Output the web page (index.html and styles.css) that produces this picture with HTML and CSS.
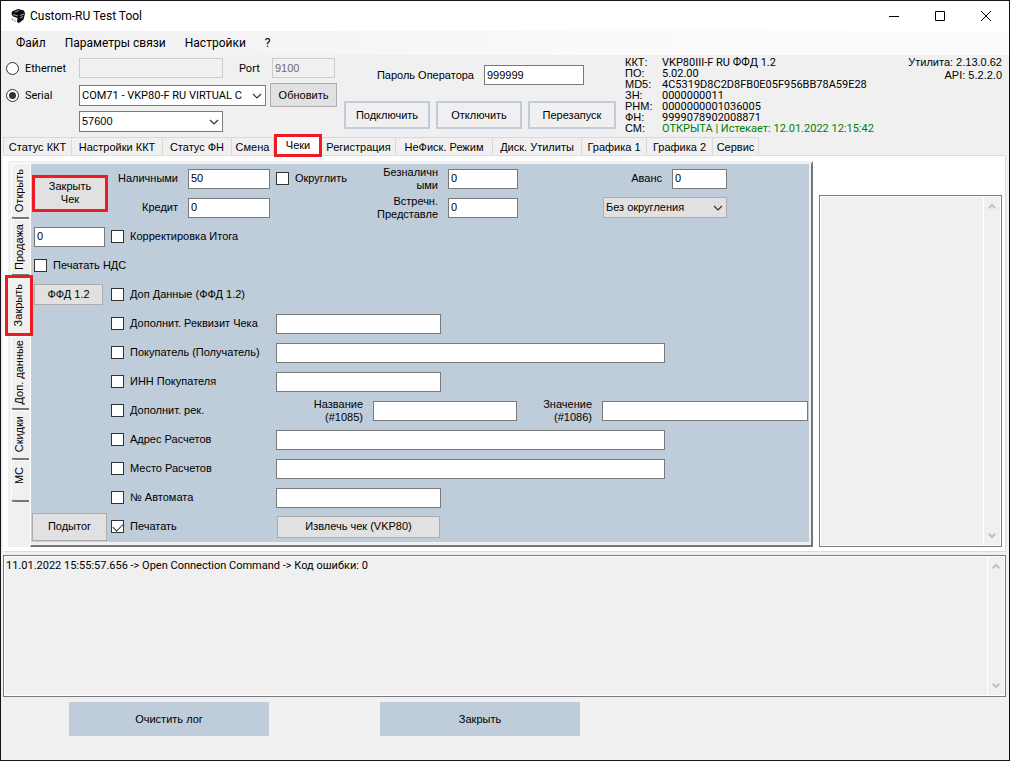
FILE: index.html
```html
<!DOCTYPE html>
<html lang="ru">
<head>
<meta charset="utf-8">
<title>Custom-RU Test Tool</title>
<meta name="viewport" content="width=device-width, initial-scale=1">
<link rel="stylesheet" href="styles.css">
</head>
<body>
<svg width="0" height="0" class="sprites" aria-hidden="true">
  <symbol id="chevron" viewBox="0 0 10 6"><path d="M1 1l4 4 4-4" fill="none" stroke="#333" stroke-width="1.200"/></symbol>
  <symbol id="up" viewBox="0 0 8 6"><path d="M0.7 5.2L4 1.9l3.300 3.300" fill="none" stroke="#bfbfbf" stroke-width="2"/></symbol>
  <symbol id="down" viewBox="0 0 8 6"><path d="M0.7 0.8L4 4.100l3.300-3.300" fill="none" stroke="#bfbfbf" stroke-width="2"/></symbol>
</svg>
<div class="window">
  <header class="titlebar">
    <svg class="logo" viewBox="0 0 16 16" aria-hidden="true">
      <path d="M2 3.500L8 1l6 1.500 1 3-1.500 6L9 15l-2-1 .500-4L3 8.500 1.500 6z" fill="#0a0a0a"/>
      <path d="M5 4l4-1.500M10 7.500l4-1.500M10 10l3-1.500M3 6.500l5 1.500" stroke="#ccc" stroke-width=".8" fill="none"/>
      <path d="M1 9.500l5 1.500v3l-5-2z" fill="#e4e4e4"/>
      <path d="M2 11.500l1 .5M4.500 13l1 .5" stroke="#666" fill="none"/>
    </svg>
    <h1>Custom-RU Test Tool</h1>
    <div class="winbuttons">
      <button type="button" aria-label="Свернуть"><svg viewBox="0 0 10 10"><path d="M0 5.500h10" stroke="#000" fill="none"/></svg></button>
      <button type="button" aria-label="Развернуть"><svg viewBox="0 0 10 10"><path d="M.5.5h9v9h-9z" stroke="#000" fill="none"/></svg></button>
      <button type="button" aria-label="Закрыть окно"><svg viewBox="0 0 10 10"><path d="M0 0l10 10M10 0L0 10" stroke="#000" fill="none"/></svg></button>
    </div>
  </header>

  <nav class="menu">
    <button type="button">Файл</button>
    <button type="button">Параметры связи</button>
    <button type="button">Настройки</button>
    <button type="button">?</button>
  </nav>

  <section class="connection">
    <div class="port-settings">
      <div class="line">
        <label class="radio"><input type="radio" name="link">Ethernet</label>
        <input class="text w-host" type="text" aria-label="Адрес" disabled>
        <label class="port-label" for="port">Port</label>
        <input class="text w-port" id="port" type="text" value="9100" disabled>
      </div>
      <div class="line">
        <label class="radio"><input type="radio" name="link" checked>Serial</label>
        <span class="combo w-com"><select aria-label="COM порт"><option>COM71 - VKP80-F RU VIRTUAL C</option></select><svg><use href="#chevron"/></svg></span>
        <button type="button" class="btn refresh">Обновить</button>
      </div>
      <div class="line baud">
        <span class="combo w-host"><select aria-label="Скорость"><option>57600</option></select><svg><use href="#chevron"/></svg></span>
      </div>
    </div>
    <div class="operator">
      <div class="password">
        <label for="password">Пароль Оператора</label>
        <input class="text w-pass" id="password" type="text" value="999999">
      </div>
      <div class="actions">
        <button type="button" class="outline">Подключить</button>
        <button type="button" class="outline">Отключить</button>
        <button type="button" class="outline">Перезапуск</button>
      </div>
    </div>
    <dl class="device">
      <dt>ККТ:</dt><dd>VKP80III-F RU ФФД 1.2</dd>
      <dt>ПО:</dt><dd>5.02.00</dd>
      <dt>MD5:</dt><dd>4C5319D8C2D8FB0E05F956BB78A59E28</dd>
      <dt>ЗН:</dt><dd>0000000011</dd>
      <dt>РНМ:</dt><dd>0000000001036005</dd>
      <dt>ФН:</dt><dd>9999078902008871</dd>
      <dt>СМ:</dt><dd class="open">ОТКРЫТА | Истекает: 12.01.2022 12:15:42</dd>
    </dl>
    <div class="versions">
      <div>Утилита: 2.13.0.62</div>
      <div>API: 5.2.2.0</div>
    </div>
  </section>

  <div class="tabs" role="tablist">
    <button type="button" role="tab">Статус ККТ</button>
    <button type="button" role="tab">Настройки ККТ</button>
    <button type="button" role="tab">Статус ФН</button>
    <button type="button" role="tab">Смена</button>
    <button type="button" role="tab" class="marked" aria-selected="true">Чеки</button>
    <button type="button" role="tab">Регистрация</button>
    <button type="button" role="tab">НеФиск. Режим</button>
    <button type="button" role="tab">Диск. Утилиты</button>
    <button type="button" role="tab">Графика 1</button>
    <button type="button" role="tab">Графика 2</button>
    <button type="button" role="tab">Сервис</button>
  </div>

  <main class="page">
    <div class="sidetabs" role="tablist">
      <button type="button" role="tab"><span>Открыть</span></button>
      <button type="button" role="tab"><span>Продажа</span></button>
      <button type="button" role="tab" class="marked" aria-selected="true"><span>Закрыть</span></button>
      <button type="button" role="tab"><span>Доп. данные</span></button>
      <button type="button" role="tab"><span>Скидки</span></button>
      <button type="button" role="tab" class="last"><span>МС</span></button>
    </div>

    <form class="panel">
      <div class="payments">
        <button type="button" class="btn marked close-check">Закрыть<br>Чек</button>
        <label for="cash" class="r">Наличными</label>
        <input class="text" id="cash" type="text" value="50">
        <label class="check"><input type="checkbox">Округлить</label>
        <label for="cashless" class="r">Безналичн<br>ыми</label>
        <input class="text" id="cashless" type="text" value="0">
        <label for="advance" class="r">Аванс</label>
        <input class="text" id="advance" type="text" value="0">
        <label for="credit" class="r">Кредит</label>
        <input class="text" id="credit" type="text" value="0">
        <label for="counter" class="r counter">Встречн.<br>Представле</label>
        <input class="text" id="counter" type="text" value="0">
        <span class="combo gray rounding"><select aria-label="Округление"><option>Без округления</option></select><svg><use href="#chevron"/></svg></span>
      </div>

      <div class="row">
        <div class="lead"><input class="text w-total" type="text" value="0" aria-label="Итог"></div>
        <label class="check"><input type="checkbox">Корректировка Итога</label>
      </div>
      <div class="row">
        <label class="check lead-check"><input type="checkbox">Печатать НДС</label>
      </div>
      <div class="row">
        <div class="lead"><button type="button" class="btn ffd">ФФД 1.2</button></div>
        <label class="check"><input type="checkbox">Доп Данные (ФФД 1.2)</label>
      </div>
      <div class="row">
        <div class="lead"></div>
        <label class="check"><input type="checkbox">Дополнит. Реквизит Чека</label>
        <input class="text w-short" type="text" aria-label="Дополнит. Реквизит Чека">
      </div>
      <div class="row">
        <div class="lead"></div>
        <label class="check"><input type="checkbox">Покупатель (Получатель)</label>
        <input class="text w-long" type="text" aria-label="Покупатель">
      </div>
      <div class="row">
        <div class="lead"></div>
        <label class="check"><input type="checkbox">ИНН Покупателя</label>
        <input class="text w-short" type="text" aria-label="ИНН Покупателя">
      </div>
      <div class="row">
        <div class="lead"></div>
        <label class="check"><input type="checkbox">Дополнит. рек.</label>
        <label class="r w-name" for="name">Название<br>(#1085)</label>
        <input class="text w-host" id="name" type="text">
        <label class="r w-value" for="value">Значение<br>(#1086)</label>
        <input class="text grow" id="value" type="text">
      </div>
      <div class="row">
        <div class="lead"></div>
        <label class="check"><input type="checkbox">Адрес Расчетов</label>
        <input class="text w-long" type="text" aria-label="Адрес Расчетов">
      </div>
      <div class="row">
        <div class="lead"></div>
        <label class="check"><input type="checkbox">Место Расчетов</label>
        <input class="text w-long" type="text" aria-label="Место Расчетов">
      </div>
      <div class="row">
        <div class="lead"></div>
        <label class="check"><input type="checkbox">№ Автомата</label>
        <input class="text w-short" type="text" aria-label="Номер Автомата">
      </div>
      <div class="row">
        <div class="lead full"><button type="button" class="btn subtotal">Подытог</button></div>
        <label class="check"><input type="checkbox" checked>Печатать</label>
        <button type="button" class="btn extract">Извлечь чек (VKP80)</button>
      </div>
    </form>

    <div class="memo preview">
      <textarea readonly aria-label="Чек"></textarea>
      <div class="scroll"><svg><use href="#up"/></svg><svg><use href="#down"/></svg></div>
    </div>
  </main>

  <div class="memo log">
    <textarea readonly aria-label="Лог">11.01.2022 15:55:57.656 -&gt; Open Connection Command -&gt; Код ошибки: 0</textarea>
    <div class="scroll"><svg><use href="#up"/></svg><svg><use href="#down"/></svg></div>
  </div>

  <footer class="footer">
    <button type="button">Очистить лог</button>
    <button type="button">Закрыть</button>
  </footer>
</div>
</body>
</html>
```
FILE: styles.css
```css
* { box-sizing: border-box; }
body {
  margin: 0;
  font: 11px/13px "Liberation Sans", Arial, sans-serif;
  color: #000;
}
button, input, select, textarea {
  font: inherit;
  color: inherit;
  margin: 0;
  border-radius: 0;
}
button { padding: 0; border: 0; background: none; white-space: nowrap; }
label { white-space: nowrap; }
.sprites { position: absolute; }

.window {
  display: flex;
  flex-direction: column;
  min-height: 100vh;
  border: 1px solid #141418;
  background: #f0f0f0;
}

.titlebar { display: flex; align-items: center; height: 30px; padding-left: 9px; background: #fff; }
.logo { width: 16px; height: 16px; margin-right: 4px; }
.titlebar h1 { margin: 0; font: 12px/16px Roboto, sans-serif; flex: 1; }
.winbuttons { display: flex; }
.winbuttons button { width: 46px; height: 28px; display: grid; place-items: center; }
.winbuttons svg { width: 10px; height: 10px; }

.menu {
  display: flex;
  align-items: center;
  gap: 19px;
  height: 24px;
  padding-left: 15px;
  background: linear-gradient(90deg, #f0f0f0, #fafafa 60%, #fbfbfb);
  font: 12px/16px Roboto, sans-serif;
}

.text {
  height: 20px;
  min-width: 0;
  padding: 0 2px 1px;
  border: 1px solid #7a7a7a;
  background: #fff;
}
.text:disabled { border-color: #ccc; background: #f0f0f0; color: #6d6d6d; }
.combo { position: relative; display: block; height: 21px; }
.combo select {
  appearance: none;
  display: block;
  width: 100%;
  height: 100%;
  padding: 0 2px;
  border: 1px solid #7a7a7a;
  background: #fff;
}
.combo svg { position: absolute; right: 4px; top: 8px; width: 10px; height: 6px; pointer-events: none; }
.combo.gray select { background: #e1e1e1; border-color: #adadad; }
.btn { border: 1px solid #adadad; background: #e1e1e1; }

.w-host { width: 144px; }
.w-port { width: 63px; }
.w-com { width: 187px; }
.w-com, .port-settings label, .device dd, .log { font-family: Roboto, sans-serif; }
.w-pass { width: 100px; }
.w-total { width: 71px; }
.w-short { width: 165px; }
.w-long { width: 389px; }

input[type="radio"], input[type="checkbox"] {
  appearance: none;
  flex: none;
  width: 13px;
  height: 13px;
  border: 1px solid #333;
  background: #fff;
}
input[type="radio"] { border-radius: 50%; display: grid; place-items: center; }
input[type="radio"]:checked::after { content: ""; width: 7px; height: 7px; border-radius: 50%; background: #333; }
input[type="checkbox"]:checked::after {
  content: "";
  display: block;
  width: 9px;
  height: 5px;
  margin: 2px 0 0 1px;
  border: solid #333;
  border-width: 0 0 1px 1px;
  transform: rotate(-45deg);
}

.connection { display: flex; height: 79px; padding-left: 5px; margin-bottom: 1px; }
.port-settings { width: 331px; padding-top: 3px; }
.line { display: flex; align-items: center; height: 24px; }
.line:first-child { height: 20px; margin-bottom: 5px; }
.radio { display: flex; align-items: center; gap: 6px; width: 73px; }
.port-label { width: 33px; margin-left: 16px; }
.refresh { width: 67px; height: 24px; margin-left: 4px; }
.baud { padding-left: 73px; margin-top: 2px; }

.operator { width: 272px; margin-left: 7px; padding-top: 10px; }
.password { display: flex; align-items: center; justify-content: flex-end; gap: 10px; padding-right: 32px; }
.actions { display: grid; grid-template-columns: 86px 86px 88px; gap: 6px; margin-top: 16px; }
.outline { height: 28px; border: 2px solid #bfcddb; }

.device {
  display: grid;
  grid-template-columns: 37px auto;
  align-content: start;
  margin: 2px 0 0 9px;
  line-height: 11px;
  white-space: nowrap;
}
.device dd { margin: 0; }
.open { color: #008000; }
.versions { margin-left: auto; padding: 1px 7px 0 0; text-align: right; white-space: nowrap; }

.tabs {
  display: grid;
  grid-template-columns: 69px 91px 69px 42px 48px 74px 97px 89px 65px 66px 46px;
  height: 20px;
  padding: 2px 0 0 2px;
}
.tabs button { border: 1px solid #d9d9d9; border-width: 1px 1px 0 0; padding: 1px 0 0; }
.tabs button:first-child { border-left-width: 1px; }
.tabs .marked {
  position: relative;
  z-index: 1;
  margin: -3px 0 -2px;
  padding: 0 0 1px;
  border: 3px solid #ed1c24;
  background: #fff;
}

.page {
  display: flex;
  margin: 0 3px 0 2px;
  padding: 5px 3px 4px 4px;
  border: 1px solid #dcdcdc;
  border-left-color: #fff;
  background: #fff;
}
.sidetabs {
  display: grid;
  grid-template-rows: 56px 57px 60px 74px 50px 42px;
  width: 22px;
  padding: 2px 1px 0 3px;
  background: #f0f0f0;
}
.sidetabs button {
  display: grid;
  place-items: center;
  padding-right: 2px;
  border-top: 1px solid #fff;
  border-left: 1px solid #fff;
  border-bottom: 2px solid #777;
  border-bottom-left-radius: 3px;
}
.sidetabs span { writing-mode: vertical-rl; transform: rotate(180deg); }
.sidetabs .last { padding-bottom: 10px; }
.sidetabs .marked {
  position: relative;
  z-index: 1;
  margin: -1px -4px 0 -6px;
  border: 3px solid #ed1c24;
  border-radius: 0;
  background: #f0f0f0;
}

.panel {
  flex: 1;
  padding: 0 2px 4px 0;
  border: solid;
  border-width: 3px 2px 2px 1px;
  border-color: #f0f0f0 #777 #777 #fff;
  background: #bfccd9;
  box-shadow: inset -2px -3px #f0f0f0;
}
.payments {
  display: grid;
  grid-template-columns: 76px 68px 82px 85px 75px 70px 142px 55px;
  grid-template-rows: 29px 29px;
  column-gap: 6px;
  align-items: center;
  padding-left: 1px;
}
.payments .r { padding-right: 4px; }
.r { text-align: right; }
.close-check { grid-row: span 2; height: 37px; line-height: 13px; }
.btn.marked { border: 3px solid #ed1c24; }
.counter { grid-column: 5; }
.rounding { grid-column: 7 / 9; justify-self: end; width: 124px; }

.check { display: flex; align-items: center; gap: 6px; }
.row { display: flex; align-items: center; height: 29px; }
.row .check { width: 165px; }
.lead { width: 80px; padding-left: 3px; }
.lead.full { padding-left: 1px; }
.row .lead-check { padding-left: 3px; }
.ffd { width: 69px; height: 21px; }
.subtotal { width: 75px; height: 28px; }
.extract { width: 163px; height: 22px; margin-left: 1px; }
.w-name, .w-value { width: 97px; padding-right: 10px; }
.w-value { width: 85px; }
.grow { flex: 1; margin-right: 1px; }

.memo { display: flex; border: 1px solid #7a7a7a; padding: 1px; background: #fff; }
.memo textarea {
  flex: 1;
  min-width: 0;
  padding: 2px 1px;
  border: 0;
  resize: none;
  background: #f0f0f0;
  overflow: hidden;
}
.scroll {
  display: flex;
  flex-direction: column;
  justify-content: space-between;
  align-items: center;
  width: 16px;
  margin-left: 1px;
  padding: 6px 0;
  background: #f0f0f0;
}
.scroll svg { width: 8px; height: 6px; }
.preview { width: 183px; margin: 34px 0 0 6px; }
.log { height: 142px; margin: 3px 3px 0 2px; }

.footer { display: flex; gap: 111px; padding: 5px 0 24px 68px; }
.footer button { width: 200px; height: 34px; background: #bfccd9; }
```
